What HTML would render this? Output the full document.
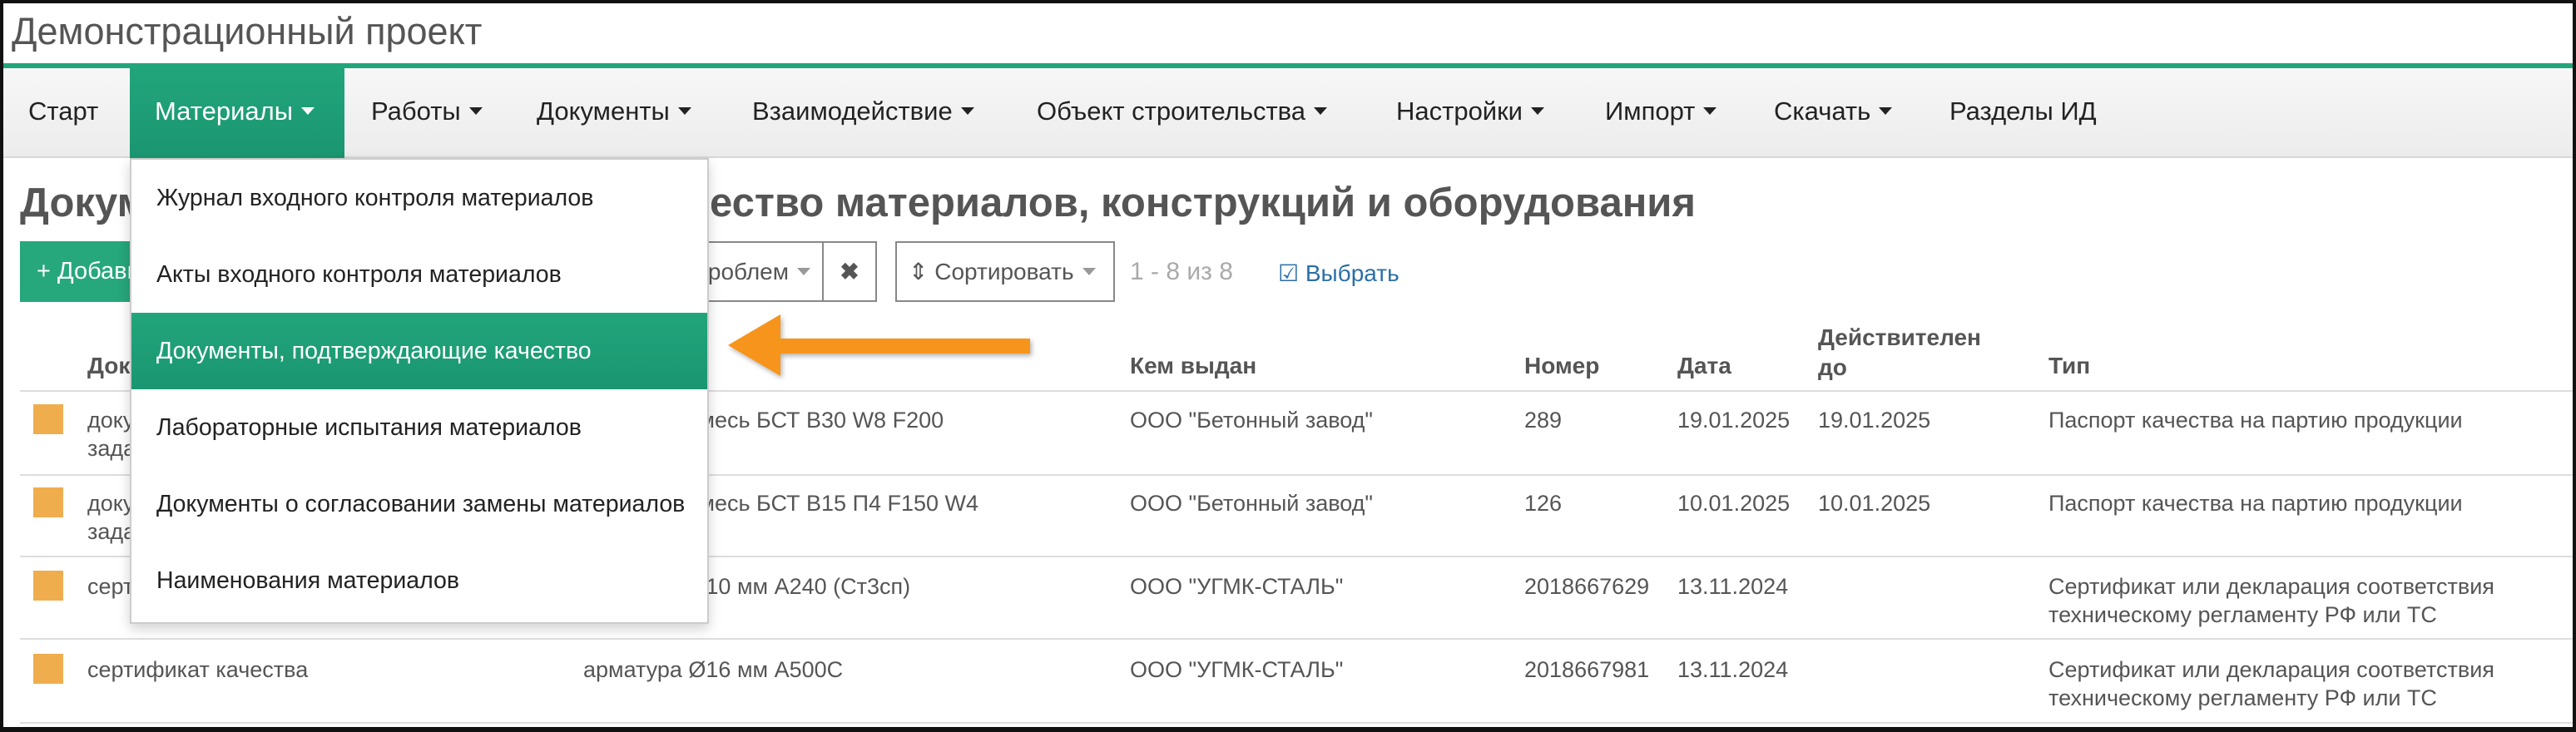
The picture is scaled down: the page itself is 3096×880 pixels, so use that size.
<!DOCTYPE html>
<html><head><meta charset="utf-8"><style>
*{box-sizing:border-box;margin:0;padding:0}
body{width:3096px;height:880px;overflow:hidden;background:#fff;font-family:"Liberation Sans",Arial,sans-serif;color:#555;position:relative}
.frame{position:absolute;left:0;top:0;width:3096px;height:880px;border:4px solid #111;border-bottom-width:6px;z-index:50;pointer-events:none}
.abs{position:absolute;white-space:nowrap}
.title{left:14px;top:12px;font-size:45px;color:#555}
.gline{position:absolute;left:0;top:76px;width:3096px;height:6px;background:#22a57b}
.nav{position:absolute;left:0;top:82px;width:3096px;height:108px;background:linear-gradient(#f7f7f7,#ececec);border-bottom:2px solid #d8d8d8}
.nav span{position:absolute;top:34px;font-size:31px;color:#222}
.car{display:inline-block;width:0;height:0;border-left:8px solid transparent;border-right:8px solid transparent;border-top:9px solid currentColor;vertical-align:middle;margin-left:10px;margin-top:-4px}
.act{position:absolute;left:156px;top:82px;width:258px;height:108px;background:linear-gradient(#22a57b,#1a9670)}
h1{position:absolute;left:24px;top:216px;font-size:49px;font-weight:bold;color:#555;white-space:nowrap}
.btn{position:absolute;top:290px;height:73px;border:2px solid #888;background:#fff;font-size:28px;color:#555;line-height:69px;padding:0 14px;white-space:nowrap}
.green{position:absolute;left:24px;top:290px;width:200px;height:73px;background:#27a77c;color:#fff;font-size:29px;line-height:73px;padding-left:20px}
.th{position:absolute;font-size:28px;font-weight:bold;color:#555;white-space:nowrap}
.td{position:absolute;font-size:27px;color:#555;white-space:nowrap;line-height:34px}
.hl{position:absolute;left:24px;width:3072px;height:2px;background:#ddd}
.sq{position:absolute;left:40px;width:36px;height:36px;background:#f0ad4e}
.dd{position:absolute;left:156px;top:190px;width:696px;height:560px;background:#fff;border:2px solid #ccc;box-shadow:0 6px 14px rgba(0,0,0,.18);z-index:10}
.dd div{position:absolute;left:0;width:692px;height:92px;font-size:28.5px;color:#222;padding-left:30px;line-height:92px;white-space:nowrap}
.dd .sel{background:linear-gradient(#22a57b,#1a9670);color:#fff}
</style></head><body>
<div class="frame"></div>
<div class="abs title">Демонстрационный проект</div>
<div class="gline"></div>
<div class="nav"></div>
<div class="act"></div>
<div class="nav" style="background:none;border:none">
<span style="left:34px">Старт</span>
<span style="left:186px;color:#fff">Материалы<i class="car"></i></span>
<span style="left:446px">Работы<i class="car"></i></span>
<span style="left:645px">Документы<i class="car"></i></span>
<span style="left:904px">Взаимодействие<i class="car"></i></span>
<span style="left:1246px">Объект строительства<i class="car"></i></span>
<span style="left:1678px">Настройки<i class="car"></i></span>
<span style="left:1929px">Импорт<i class="car"></i></span>
<span style="left:2132px">Скачать<i class="car"></i></span>
<span style="left:2343px">Разделы ИД</span>
</div>
<h1>Документы, подтверждающие качество материалов, конструкций и оборудования</h1>
<div class="green">+ Добавить</div>
<div class="btn" style="left:700px;width:290px;text-align:right">Без проблем<i class="car" style="color:#999"></i></div>
<div class="btn" style="left:988px;width:66px;text-align:center;font-weight:bold;padding:0">✖</div>
<div class="btn" style="left:1076px;width:264px">⇕ Сортировать<i class="car" style="color:#999"></i></div>
<div class="abs" style="left:1358px;top:310px;font-size:30px;color:#aaa">1 - 8 из 8</div>
<div class="abs" style="left:1536px;top:312px;font-size:28px;color:#2a6fa8">☑ Выбрать</div>

<div class="th" style="left:105px;top:424px">Документ</div>
<div class="th" style="left:701px;top:424px">Материал</div>
<div class="th" style="left:1358px;top:424px">Кем выдан</div>
<div class="th" style="left:1832px;top:424px">Номер</div>
<div class="th" style="left:2016px;top:424px">Дата</div>
<div class="th" style="left:2185px;top:388px;line-height:36px">Действителен<br>до</div>
<div class="th" style="left:2462px;top:424px">Тип</div>
<div class="hl" style="top:469px"></div>
<div class="hl" style="top:570px"></div>
<div class="hl" style="top:668px"></div>
<div class="hl" style="top:767px"></div>
<div class="hl" style="top:868px"></div>

<div class="sq" style="top:486px"></div>
<div class="td" style="left:105px;top:488px">документ о качестве<br>задания</div>
<div class="td" style="left:701px;top:488px">Бетонная смесь БСТ В30 W8 F200</div>
<div class="td" style="left:1358px;top:488px">ООО "Бетонный завод"</div>
<div class="td" style="left:1832px;top:488px">289</div>
<div class="td" style="left:2016px;top:488px">19.01.2025</div>
<div class="td" style="left:2185px;top:488px">19.01.2025</div>
<div class="td" style="left:2462px;top:488px">Паспорт качества на партию продукции</div>

<div class="sq" style="top:586px"></div>
<div class="td" style="left:105px;top:588px">документ о качестве<br>задания</div>
<div class="td" style="left:701px;top:588px">Бетонная смесь БСТ В15 П4 F150 W4</div>
<div class="td" style="left:1358px;top:588px">ООО "Бетонный завод"</div>
<div class="td" style="left:1832px;top:588px">126</div>
<div class="td" style="left:2016px;top:588px">10.01.2025</div>
<div class="td" style="left:2185px;top:588px">10.01.2025</div>
<div class="td" style="left:2462px;top:588px">Паспорт качества на партию продукции</div>

<div class="sq" style="top:686px"></div>
<div class="td" style="left:105px;top:688px">сертификат качества</div>
<div class="td" style="left:701px;top:688px">арматура Ø10 мм А240 (Ст3сп)</div>
<div class="td" style="left:1358px;top:688px">ООО "УГМК-СТАЛЬ"</div>
<div class="td" style="left:1832px;top:688px">2018667629</div>
<div class="td" style="left:2016px;top:688px">13.11.2024</div>
<div class="td" style="left:2462px;top:688px">Сертификат или декларация соответствия<br>техническому регламенту РФ или ТС</div>

<div class="sq" style="top:786px"></div>
<div class="td" style="left:105px;top:788px">сертификат качества</div>
<div class="td" style="left:701px;top:788px">арматура Ø16 мм А500С</div>
<div class="td" style="left:1358px;top:788px">ООО "УГМК-СТАЛЬ"</div>
<div class="td" style="left:1832px;top:788px">2018667981</div>
<div class="td" style="left:2016px;top:788px">13.11.2024</div>
<div class="td" style="left:2462px;top:788px">Сертификат или декларация соответствия<br>техническому регламенту РФ или ТС</div>

<div class="dd">
<div style="top:0">Журнал входного контроля материалов</div>
<div style="top:92px">Акты входного контроля материалов</div>
<div class="sel" style="top:184px">Документы, подтверждающие качество</div>
<div style="top:276px">Лабораторные испытания материалов</div>
<div style="top:368px">Документы о согласовании замены материалов</div>
<div style="top:460px">Наименования материалов</div>
</div>
<svg style="position:absolute;left:860px;top:370px;z-index:20" width="400" height="100">
<defs><filter id="s"><feDropShadow dx="2" dy="3" stdDeviation="3" flood-opacity=".3"/></filter></defs>
<polygon filter="url(#s)" fill="#f7941d" points="15,45 78,8 78,37 378,37 378,55 78,55 78,82"/>
</svg>
</body></html>
